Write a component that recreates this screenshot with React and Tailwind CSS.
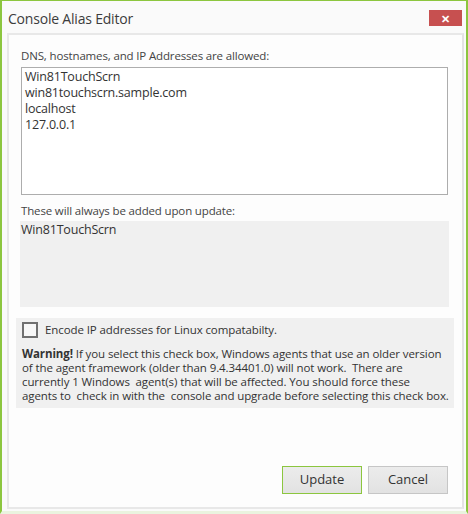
import React, { useState } from 'react';

const font = { fontFamily: '"Open Sans", "Noto Sans", sans-serif' };

const App = () => {
    const [encode, setEncode] = useState(false);

    return (
        <div
            className='w-[468px] h-[514px] flex flex-col bg-[#fafafa] border-l-2 border-r-2 border-t border-b-[3px] border-l-[#8cc63f] border-r-[#8cc63f] border-t-[#8cc63f] border-b-[#eaf3df] text-[#444]'
            style={font}
        >
            <div className='h-[32px] flex items-start justify-between pl-[6px] pr-[4px]'>
                <span className='text-[14px] tracking-[-0.2px] leading-[20px] mt-[8px] text-[#3c3c3c]'>Console Alias Editor</span>
                <button className='w-[33px] h-[16px] mt-[9px] bg-[#c75050] flex items-center justify-center text-white text-[11px] leading-none font-bold'>
                    ✕
                </button>
            </div>
            <div className='ml-[5px] mr-[2px] h-[476px] border-2 border-[#e8e8e8] border-r-[#e3e3e3] bg-[#fdfdfd] flex flex-col'>
                <div className='ml-[12px] mt-[13px] text-[11.5px] tracking-[-0.15px] leading-[16px]'>DNS, hostnames, and IP Addresses are allowed:</div>
                <div className='ml-[12px] mt-[3px] w-[427px] h-[128px] border border-[#adadad] bg-white px-[3px] py-[1px] text-[12.5px] tracking-[-0.2px] leading-[16px] text-[#333]'>
                    <div>Win81TouchScrn</div>
                    <div>win81touchscrn.sample.com</div>
                    <div>localhost</div>
                    <div>127.0.0.1</div>
                </div>
                <div className='ml-[12px] mt-[8px] text-[11.5px] tracking-[-0.15px] leading-[16px]'>These will always be added upon update:</div>
                <div className='ml-[11px] mt-[2px] w-[429px] h-[86px] bg-[#f0f0f0] px-[1px] py-[1px] text-[12.5px] tracking-[-0.2px] leading-[16px] text-[#333]'>
                    Win81TouchScrn
                </div>
                <div className='ml-[7px] mt-[11px] w-[438px] h-[90px] bg-[#f0f0f0] px-[6px] pt-[4px]'>
                    <label className='flex items-center gap-[7px] cursor-pointer'>
                        <span
                            className='w-[16px] h-[16px] border-2 border-[#707070] bg-[#f7f7f7] flex items-center justify-center text-[11px] leading-none'
                            onClick={() => setEncode(!encode)}
                        >
                            {encode ? '✓' : ''}
                        </span>
                        <span className='text-[11.5px] tracking-[-0.1px] leading-[16px] text-[#333]'>Encode IP addresses for Linux compatabilty.</span>
                    </label>
                    <div className='mt-[9px] text-[11.5px] tracking-[-0.1px] leading-[14px] text-[#333] whitespace-nowrap'>
                        <div><b>Warning!</b> If you select this check box, Windows agents that use an older version</div>
                        <div>of the agent framework (older than 9.4.34401.0) will not work.&nbsp; There are</div>
                        <div>currently 1 Windows&nbsp; agent(s) that will be affected. You should force these</div>
                        <div>agents to&nbsp; check in with the&nbsp; console and upgrade before selecting this check box.</div>
                    </div>
                </div>
                <div className='mt-auto mb-[13px] flex justify-end gap-[6px] mr-[14px]'>
                    <button className='w-[80px] h-[28px] border border-[#8cc63f] bg-gradient-to-b from-[#ececec] to-[#e2e2e2] text-[13px] text-[#333]'>
                        Update
                    </button>
                    <button className='w-[80px] h-[28px] border border-[#c6c6c6] bg-gradient-to-b from-[#ececec] to-[#e2e2e2] text-[13px] text-[#333]'>
                        Cancel
                    </button>
                </div>
            </div>
        </div>
    );
};

export default App;
